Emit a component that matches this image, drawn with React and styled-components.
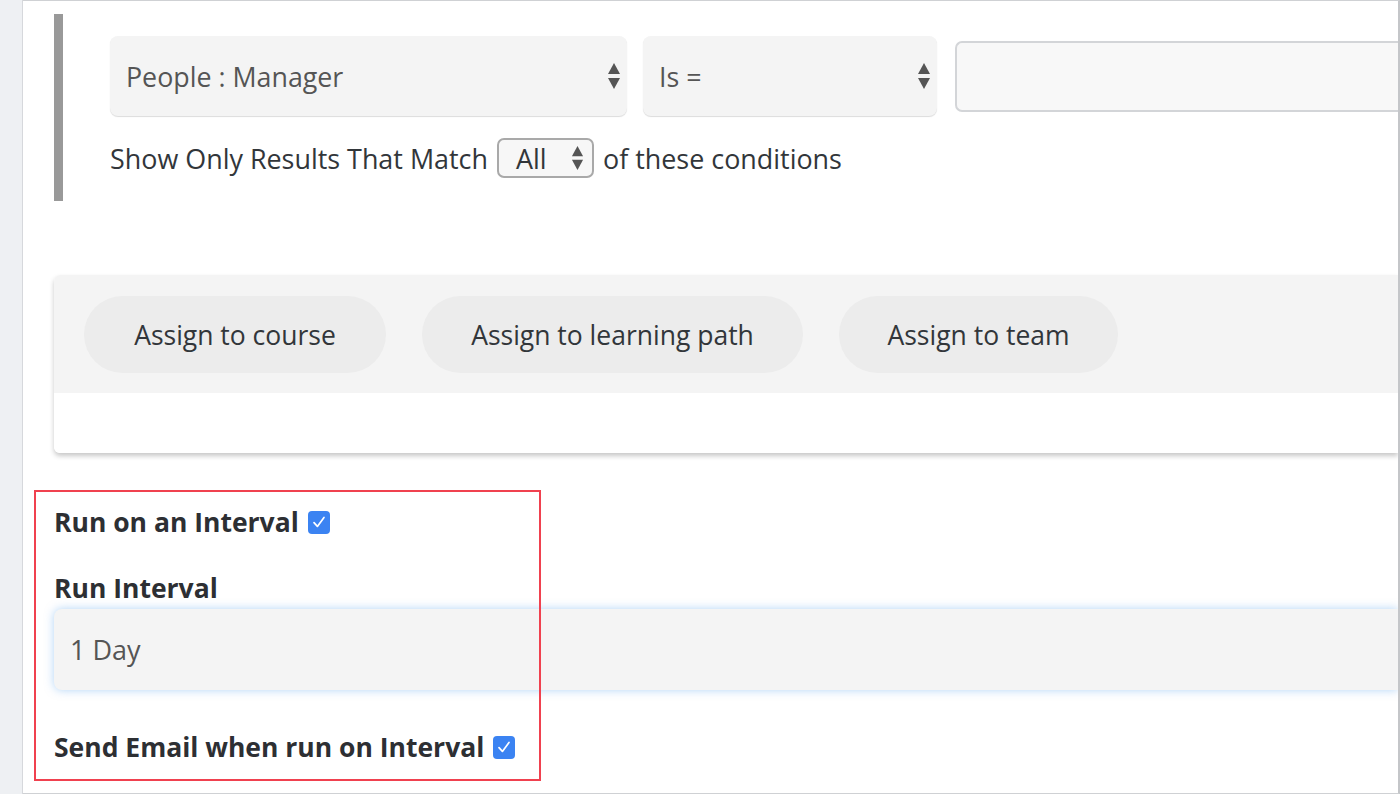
import React from "react"
import styled, { createGlobalStyle } from "styled-components"

const GlobalStyle = createGlobalStyle`
  html, body {
    margin: 0;
    padding: 0;
    background: #ffffff;
  }
  body {
    font-family: "Open Sans", "Noto Sans", sans-serif;
    color: #32363a;
  }
`

const Arrows = ({ size = 14 }) => (
  <svg width={size} height={size * 2} viewBox="0 0 14 28">
    <path d="M7 1 L13 12 L1 12 Z" fill="#555" />
    <path d="M1 16 L13 16 L7 27 Z" fill="#555" />
  </svg>
)

const Check = () => (
  <svg width="18" height="18" viewBox="0 0 18 18">
    <path d="M4 9.6 L7.4 13.4 L14 4.4" fill="none" stroke="#fff" strokeWidth="1.7" strokeLinecap="round" strokeLinejoin="round" />
  </svg>
)

export default function App() {
  return (
    <>
      <GlobalStyle />
      <Frame>
        <Gutter />
        <Main>
          <ConditionGroup>
            <ConditionRow>
              <Select width={517}>
                <span>People : Manager</span>
                <Arrows />
              </Select>
              <Select width={294}>
                <span>Is =</span>
                <Arrows />
              </Select>
              <ValueInput />
            </ConditionRow>
            <MatchLine>
              Show Only Results That Match
              <MiniSelect>
                <span>All</span>
                <Arrows size={13} />
              </MiniSelect>
              of these conditions
            </MatchLine>
          </ConditionGroup>

          <ActionCard>
            <ActionBar>
              <Pill width={302}>Assign to course</Pill>
              <Pill width={381}>Assign to learning path</Pill>
              <Pill width={279}>Assign to team</Pill>
            </ActionBar>
            <CardFooter />
          </ActionCard>

          <Settings>
            <Highlight />
            <Label>
              Run on an Interval
              <Checkbox><Check /></Checkbox>
            </Label>
            <Label top={34}>Run Interval</Label>
            <IntervalField>1 Day</IntervalField>
            <Label top={41}>
              Send Email when run on Interval
              <Checkbox><Check /></Checkbox>
            </Label>
          </Settings>
        </Main>
      </Frame>
    </>
  )
}

const Frame = styled.div`
  display: flex;
  width: 1400px;
  height: 794px;
  overflow: hidden;
`

const Gutter = styled.div`
  width: 22px;
  flex: none;
  background: #eef0f3;
  border-right: 1px solid #d6d8dc;
`

const Main = styled.div`
  flex: 1;
  min-width: 0;
  border-top: 1px solid #cfd1d4;
  border-right: 2px solid #c4c6c9;
  border-bottom: 1px solid #cfd1d4;
  padding: 13px 0 0 31px;
  box-sizing: border-box;
  overflow: hidden;
`

const ConditionGroup = styled.div`
  height: 187px;
  box-sizing: border-box;
  border-left: 9px solid #999999;
  padding: 22px 0 0 47px;
`

const ConditionRow = styled.div`
  display: flex;
  align-items: center;
  gap: 16px;
  height: 80px;
`

const Select = styled.div`
  width: ${(p) => p.width}px;
  flex: none;
  height: 80px;
  box-sizing: border-box;
  display: flex;
  align-items: center;
  justify-content: space-between;
  padding: 0 6px 0 16px;
  background: #f4f4f4;
  border-radius: 8px;
  box-shadow: 0 1px 1px rgba(0, 0, 0, 0.14);
  font-size: 26.8px;
  color: #555555;
`

const ValueInput = styled.div`
  flex: 1;
  height: 71px;
  margin-left: 2px;
  box-sizing: border-box;
  border: 2px solid #d3d5d8;
  border-right: none;
  border-radius: 7px 0 0 7px;
  background: #f8f8f8;
`

const MatchLine = styled.div`
  display: flex;
  align-items: center;
  gap: 9px;
  margin-top: 22px;
  font-size: 26.9px;
  color: #32363a;
`

const MiniSelect = styled.div`
  width: 97px;
  height: 40px;
  box-sizing: border-box;
  display: flex;
  align-items: center;
  justify-content: space-between;
  padding: 0 8px 0 17px;
  border: 2px solid #a9a9a9;
  border-radius: 7px;
  background: #f7f7f7;
  color: #32363a;
`

const ActionCard = styled.div`
  margin-top: 74px;
  height: 178px;
  display: flex;
  flex-direction: column;
  border-radius: 6px 0 0 6px;
  background: #ffffff;
  box-shadow: 0 3px 5px rgba(0, 0, 0, 0.22);
  overflow: hidden;
`

const ActionBar = styled.div`
  height: 118px;
  box-sizing: border-box;
  display: flex;
  align-items: flex-start;
  gap: 36px;
  padding: 21px 0 0 30px;
  background: #f4f4f4;
`

const Pill = styled.div`
  width: ${(p) => p.width}px;
  height: 77px;
  display: flex;
  align-items: center;
  justify-content: center;
  border-radius: 39px;
  background: #ececec;
  font-size: 26.5px;
  color: #32363a;
`

const CardFooter = styled.div`
  flex: 1;
  background: #ffffff;
`

const Settings = styled.div`
  position: relative;
  margin-top: 53px;
`

const Highlight = styled.div`
  position: absolute;
  left: -20px;
  top: -16px;
  width: 507px;
  height: 291px;
  box-sizing: border-box;
  border: 2px solid #f0414f;
  pointer-events: none;
`

const Label = styled.div`
  display: flex;
  align-items: center;
  gap: 9px;
  height: 32px;
  margin-top: ${(p) => p.top || 0}px;
  font-weight: 700;
  font-size: 26.5px;
  color: #2d2f33;
`

const Checkbox = styled.span`
  width: 22px;
  height: 23px;
  display: inline-flex;
  align-items: center;
  justify-content: center;
  border-radius: 4px;
  background: #3b83f2;
`

const IntervalField = styled.div`
  margin-top: 5px;
  height: 81px;
  box-sizing: border-box;
  display: flex;
  align-items: center;
  padding-left: 16px;
  border-radius: 8px 0 0 8px;
  background: #f4f4f4;
  box-shadow: 0 0 10px rgba(100, 170, 240, 0.5);
  font-size: 27px;
  color: #555555;
`
